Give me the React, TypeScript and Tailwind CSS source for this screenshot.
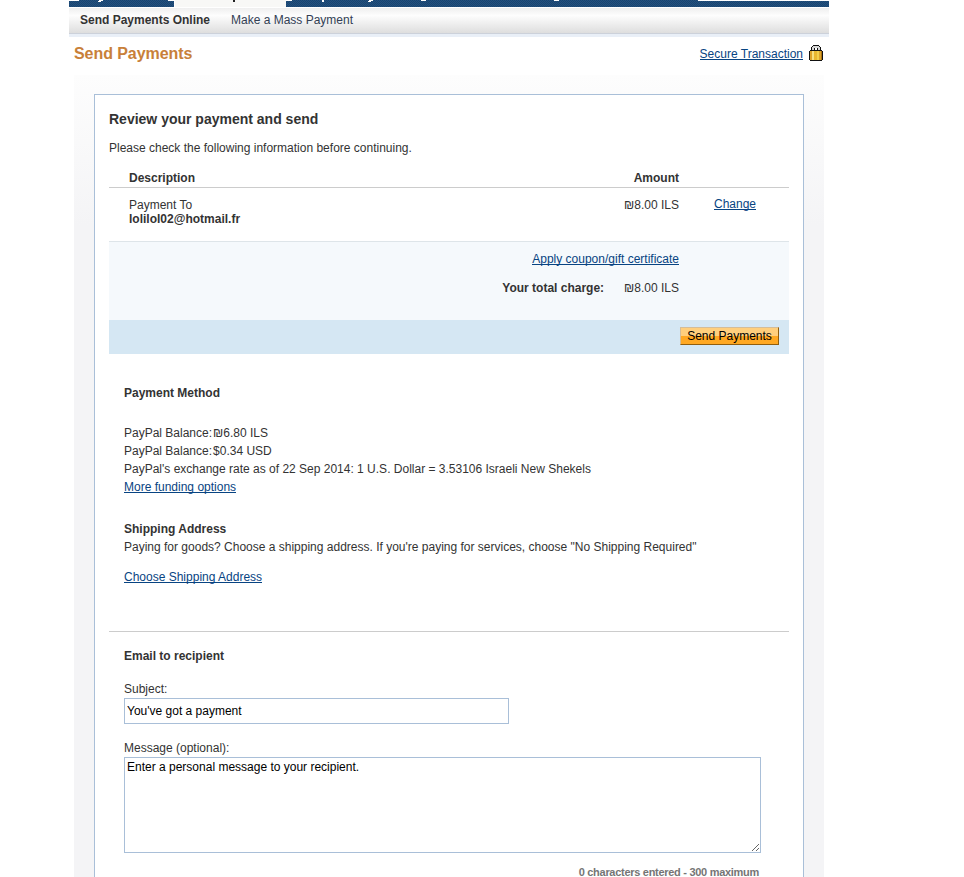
import React from "react";

function Row({ h, className = "", children }: { h: string; className?: string; children?: React.ReactNode }) {
  return <div className={`${h} shrink-0 whitespace-nowrap ${className}`}>{children}</div>;
}

function Link({ children }: { children: React.ReactNode }) {
  return (
    <a href="#" className="inline-block h-[13px] border-b border-[#084482] text-[#084482] leading-[14px]">
      {children}
    </a>
  );
}

function Lock() {
  return (
    <svg width="14" height="16" viewBox="0 0 14 16" shapeRendering="crispEdges">
      <path d="M4 0h6v1h1v1h1v3h1v1h1v9h-1v1H1v-1H0V6h1V5h1V2h1V1h1z" fill="#111" />
      <path d="M4 1h6v1h1v3H9V3H5v2H3V2h1z" fill="#d8d8d8" />
      <path d="M6 3h2v2H6z" fill="#fff" />
      <path d="M1 6h12v9H1z" fill="#dda32a" />
      <path d="M3 6h2v9H3z" fill="#f8e080" />
      <path d="M5 6h3v9H5z" fill="#eab72f" />
      <path d="M8 6h2v9H8z" fill="#f3cf4c" />
      <path d="M12 6h1v9h-1z" fill="#a8700f" />
    </svg>
  );
}

function TopBar() {
  return (
    <div className="relative ml-[69px] h-[7px] w-[760px] overflow-hidden bg-[#1b4672]">
      <div className="absolute inset-0 bg-[repeating-conic-gradient(#194470_0_25%,#22507e_0_50%)] bg-[length:2px_2px]" />
      <div className="absolute left-0 top-0 h-px w-[10px] bg-white" />
      <div className="absolute left-[99px] top-0 h-px w-[6px] bg-white" />
      <div className="absolute left-[105px] top-0 h-[7px] w-[112px] border-l border-white bg-[#f8f8f6]" />
      <div className="absolute left-[217px] top-0 h-px w-[6px] bg-white" />
      <div className="absolute left-[30px] top-0 h-px w-[4px] bg-white" />
      <div className="absolute left-[29px] top-px h-px w-[3px] bg-white" />
      <div className="absolute left-[164px] top-0 h-[2px] w-[2px] bg-[#222]" />
      <div className="absolute left-[253px] top-0 h-[2px] w-[2px] bg-white" />
      <div className="absolute left-[300px] top-0 h-px w-[4px] bg-white" />
      <div className="absolute left-[299px] top-px h-px w-[3px] bg-white" />
      <div className="absolute left-[352px] top-0 h-px w-[5px] bg-white" />
      <div className="absolute left-[485px] top-0 h-px w-[5px] bg-white" />
      <div className="absolute left-[629px] top-0 h-px w-[131px] bg-white" />
    </div>
  );
}

export default function App() {
  return (
    <div className="h-[877px] w-[964px] overflow-hidden bg-white font-['Liberation_Sans',Arial,sans-serif] text-[12px] leading-[14px] text-[#333]">
      <TopBar />
      <div className="ml-[69px] flex h-[30px] w-[760px] flex-col">
        <div className="h-px" />
        <div className="flex h-[25px] gap-[21px] bg-linear-to-b from-[#efefef] via-[#fdfdfd] via-30% to-[#dedede] pl-[11px] pt-[5px] whitespace-nowrap">
          <span className="w-[130px] font-bold">Send Payments Online</span>
          <span className="text-[#333f55]">Make a Mass Payment</span>
        </div>
        <div className="h-px bg-[#ccd1da]" />
        <div className="h-[3px] bg-[#e9eff7]" />
      </div>
      <div className="ml-[74px] flex h-[38px] w-[749px] justify-between">
        <h1 className="pt-[7px] text-[16px] font-bold leading-[19px] tracking-[-0.07px] text-[#c88039]">Send Payments</h1>
        <div className="flex gap-[6px] pt-[8px]">
          <div className="pt-[2px]"><Link>Secure Transaction</Link></div>
          <Lock />
        </div>
      </div>
      <div className="ml-[74px] h-[802px] w-[750px] bg-[linear-gradient(to_bottom,#fdfdfd_0px,#f4f4f6_150px)] px-[20px] pt-[19px]">
        <main className="flex h-[800px] w-[710px] flex-col border border-[#a9bfd8] bg-white pl-[14px]">
          <Row h="h-[45px]" className="pt-[16px] text-[14px] font-bold leading-[16px]">Review your payment and send</Row>
          <Row h="h-[30px]" className="pt-[1px]">Please check the following information before continuing.</Row>
          <Row h="h-[18px]" className="flex w-[680px] justify-between border-b border-[#ccc] pl-[20px] pr-[110px] pt-[1px] font-bold">
            <span>Description</span>
            <span>Amount</span>
          </Row>
          <Row h="h-[54px]" className="flex w-[680px] border-b border-[#dee5e9] pl-[20px] pt-[10px]">
            <div className="w-[440px]">
              Payment To
              <br />
              <b>lolilol02@hotmail.fr</b>
            </div>
            <span className="w-[110px] text-right">₪8.00 ILS</span>
            <div className="-mt-px pl-[35px]"><Link>Change</Link></div>
          </Row>
          <div className="flex h-[78px] w-[680px] shrink-0 flex-col items-end bg-[#f5f9fc] pr-[110px] pt-[10px]">
            <div className="h-[29px]"><Link>Apply coupon/gift certificate</Link></div>
            <div className="flex gap-[20px]">
              <b>Your total charge:</b>
              <span>₪8.00 ILS</span>
            </div>
          </div>
          <div className="flex h-[34px] w-[680px] shrink-0 justify-end bg-[#d5e7f3] pr-[10px] pt-[7px]">
            <button className="h-[18px] w-[99px] whitespace-nowrap border border-b-[#915e0d] border-l-[#d5bd98] border-r-[#915e0d] border-t-[#d5bd98] bg-[linear-gradient(#ffcf7d_50%,#ffa822_50%)] text-[12px] leading-[16px] text-black">
              Send Payments
            </button>
          </div>
          <div className="flex flex-col pl-[15px]">
            <Row h="h-[72px]" className="pt-[32px] font-bold">Payment Method</Row>
            <Row h="h-[18px]" className="flex gap-px"><span>PayPal Balance:</span><span>₪6.80 ILS</span></Row>
            <Row h="h-[18px]" className="flex gap-px"><span>PayPal Balance:</span><span>$0.34 USD</span></Row>
            <Row h="h-[18px]">PayPal's exchange rate as of 22 Sep 2014: 1 U.S. Dollar = 3.53106 Israeli New Shekels</Row>
            <Row h="h-[42px]"><Link>More funding options</Link></Row>
            <Row h="h-[18px]" className="font-bold">Shipping Address</Row>
            <Row h="h-[30px]">Paying for goods? Choose a shipping address. If you're paying for services, choose "No Shipping Required"</Row>
            <Row h="h-[61px]"><Link>Choose Shipping Address</Link></Row>
          </div>
          <div className="h-px w-[680px] shrink-0 bg-[#ccc]" />
          <div className="flex flex-col pl-[15px]">
            <Row h="h-[50px]" className="pt-[17px] font-bold">Email to recipient</Row>
            <Row h="h-[16px]">Subject:</Row>
            <input defaultValue="You've got a payment" className="h-[26px] w-[385px] border border-[#a9bfd8] bg-white px-[2px] text-[12px] text-black" />
            <Row h="h-[33px]" className="pt-[17px]">Message (optional):</Row>
            <textarea defaultValue="Enter a personal message to your recipient." className="block h-[96px] w-[637px] resize overflow-hidden border border-[#a9bfd8] bg-white px-[2px] py-[2px] text-[12px] leading-[14px] text-black" />
            <div className="w-[635px] whitespace-nowrap pt-[13px] text-right text-[11px] font-bold leading-[13px] tracking-[-0.29px] text-[#757575]">0 characters entered - 300 maximum</div>
          </div>
        </main>
      </div>
    </div>
  );
}
